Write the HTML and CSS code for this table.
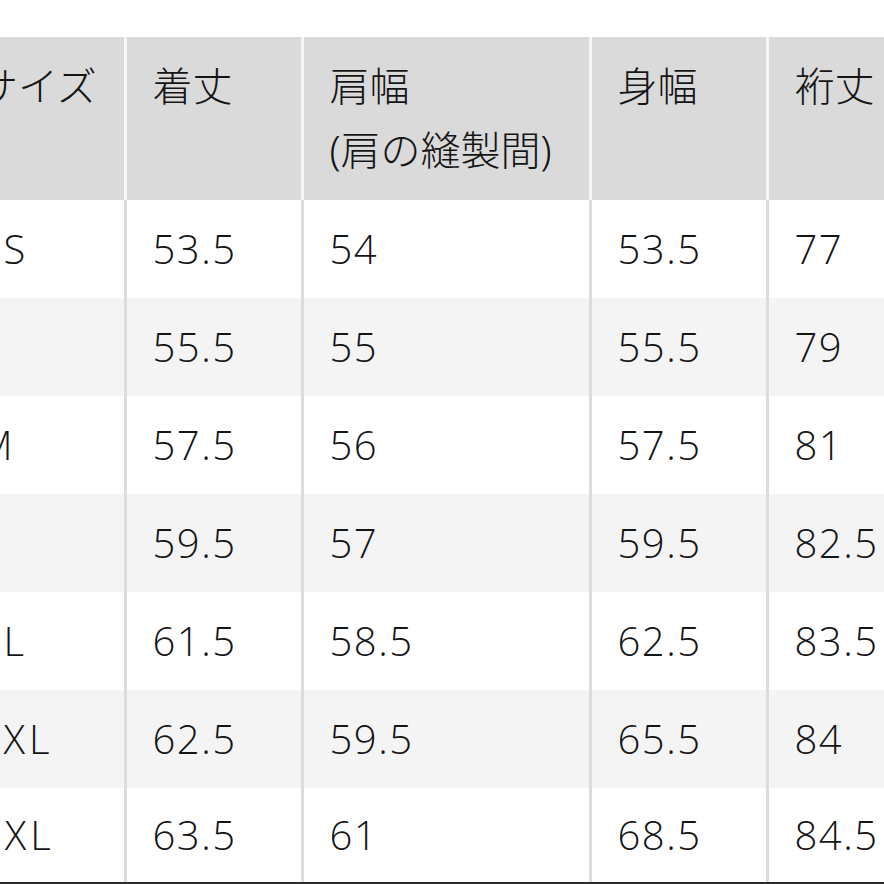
FILE: index.html
```html
<!DOCTYPE html>
<html lang="ja">
<head>
<meta charset="utf-8">
<title>サイズ表</title>
<link rel="stylesheet" href="styles.css">
</head>
<body>
<div class="frame">
  <table class="size-table">
    <colgroup>
      <col class="c-size">
      <col class="c-narrow">
      <col class="c-wide">
      <col class="c-narrow">
      <col class="c-last">
    </colgroup>
    <thead>
      <tr>
        <th>サイズ</th>
        <th>着丈</th>
        <th>肩幅<br>(肩の縫製間)</th>
        <th>身幅</th>
        <th>裄丈</th>
      </tr>
    </thead>
    <tbody>
      <tr><td>XS</td><td>53.5</td><td>54</td><td>53.5</td><td>77</td></tr>
      <tr><td>S</td><td>55.5</td><td>55</td><td>55.5</td><td>79</td></tr>
      <tr><td>M</td><td>57.5</td><td>56</td><td>57.5</td><td>81</td></tr>
      <tr><td>L</td><td>59.5</td><td>57</td><td>59.5</td><td>82.5</td></tr>
      <tr><td>XL</td><td>61.5</td><td>58.5</td><td>62.5</td><td>83.5</td></tr>
      <tr><td>XXL</td><td>62.5</td><td>59.5</td><td>65.5</td><td>84</td></tr>
      <tr class="last"><td>3XL</td><td>63.5</td><td>61</td><td>68.5</td><td>84.5</td></tr>
    </tbody>
  </table>
  <div class="edge"></div>
</div>
</body>
</html>
```

FILE: styles.css
```css
html, body {
  margin: 0;
  padding: 0;
  background: #ffffff;
}

body {
  overflow: hidden;
  width: 884px;
  height: 884px;
}

.frame {
  padding-top: 37px;
  overflow: hidden;
  width: 884px;
}

.size-table {
  margin-left: -48px;
  width: 992px;
  table-layout: fixed;
  border-collapse: collapse;
  font-family: "Noto Sans", "Noto Sans CJK JP", sans-serif;
  font-size: 40px;
  color: #151515;
}

.c-size { width: 173px; }
.c-narrow { width: 177px; }
.c-wide { width: 288px; }
.c-last { width: 177px; }

.size-table th {
  background: #dadada;
  font-weight: 300;
  text-align: left;
  vertical-align: top;
  height: 163px;
  box-sizing: border-box;
  padding: 17px 0 0 26px;
  line-height: 64px;
  border-right: 3px solid #f6f6f6;
  white-space: nowrap;
}

.size-table td {
  height: 98px;
  box-sizing: border-box;
  padding: 0 0 0 26px;
  line-height: 64px;
  vertical-align: middle;
  font-family: "Open Sans", "Noto Sans", sans-serif;
  font-weight: 300;
  letter-spacing: 1.5px;
  border-right: 3px solid #dcdcdc;
  white-space: nowrap;
}

.size-table td:first-child {
  padding-left: 26px;
  letter-spacing: 4px;
}

.size-table tbody tr:nth-child(even) td {
  background: #f4f4f4;
}

.size-table tbody tr.last td {
  height: 94px;
}

.edge {
  height: 2px;
  background: #2a2a2a;
}
```
